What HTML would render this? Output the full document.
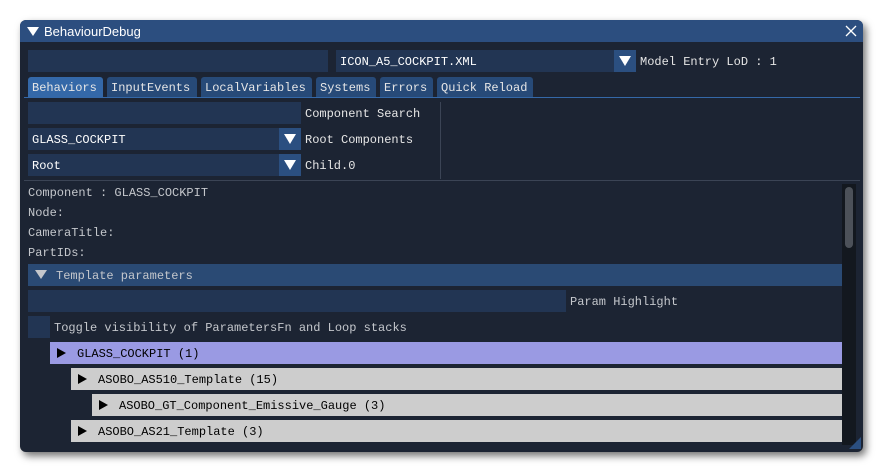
<!DOCTYPE html>
<html><head><meta charset="utf-8"><style>
*{margin:0;padding:0;box-sizing:border-box}
body{width:884px;height:473px;background:#fff;position:relative;overflow:hidden;font-family:"Liberation Mono","DejaVu Sans Mono",monospace;font-size:12px;color:#e6e6e6}
.a{position:absolute}
.win{left:20px;top:20px;width:843px;height:432px;background:#1c2433;border-radius:6px;box-shadow:3px 4px 8px rgba(0,0,0,.55);overflow:hidden}
.t{position:absolute;white-space:nowrap;line-height:22px;padding-top:1px}
.f{position:absolute;background:#223553;height:22px}
.ab{position:absolute;background:#2b4f80;width:22px;height:22px}
.ab::after{content:"";position:absolute;left:5px;top:6px;border-left:6px solid transparent;border-right:6px solid transparent;border-top:10px solid #fff}
.tab{position:absolute;top:77px;height:20px;background:#274a78;border-radius:3px 3px 0 0;line-height:20px;padding-left:4px;padding-top:1px;white-space:nowrap}
.row{position:absolute;height:22px;line-height:22px;color:#000;white-space:nowrap;padding-top:1px}
.ra{display:inline-block;width:0;height:0;border-top:5px solid transparent;border-bottom:5px solid transparent;border-left:9px solid #000;margin-right:11px;vertical-align:-1px}
.g{color:#c4c7cc}
</style></head><body>
<div class="a win"></div>
<div class="a" style="left:20px;top:20px;width:843px;height:22px;background:#2c4e7f;border-radius:6px 6px 0 0"></div>
<div class="a" style="left:27px;top:27px;border-left:6px solid transparent;border-right:6px solid transparent;border-top:9px solid #fff"></div>
<div class="t" style="left:44px;top:20px;font-family:'Liberation Sans',sans-serif;font-size:13px;color:#fff">BehaviourDebug</div>
<svg class="a" style="left:845px;top:25px" width="12" height="12"><path d="M1 1L11 11M11 1L1 11" stroke="#fff" stroke-width="1.3"/></svg>

<div class="f" style="left:28px;top:50px;width:300px"></div>
<div class="f" style="left:336px;top:50px;width:278px"></div>
<div class="ab" style="left:614px;top:50px"></div>
<div class="t" style="left:340px;top:50px;color:#fff">ICON_A5_COCKPIT.XML</div>
<div class="t" style="left:640px;top:50px">Model Entry LoD : 1</div>

<div class="tab" style="left:28px;width:75px;background:#3468a8">Behaviors</div>
<div class="tab" style="left:107px;width:90px">InputEvents</div>
<div class="tab" style="left:201px;width:111px">LocalVariables</div>
<div class="tab" style="left:316px;width:60px">Systems</div>
<div class="tab" style="left:380px;width:53px">Errors</div>
<div class="tab" style="left:437px;width:96px">Quick Reload</div>
<div class="a" style="left:24px;top:97px;width:836px;height:1px;background:#3468a8"></div>

<div class="f" style="left:28px;top:102px;width:273px"></div>
<div class="t" style="left:305px;top:102px">Component Search</div>
<div class="f" style="left:28px;top:128px;width:251px"></div>
<div class="ab" style="left:279px;top:128px"></div>
<div class="t" style="left:32px;top:128px;color:#fff">GLASS_COCKPIT</div>
<div class="t" style="left:305px;top:128px">Root Components</div>
<div class="f" style="left:28px;top:154px;width:251px"></div>
<div class="ab" style="left:279px;top:154px"></div>
<div class="t" style="left:32px;top:154px;color:#fff">Root</div>
<div class="t" style="left:305px;top:154px">Child.0</div>
<div class="a" style="left:440px;top:102px;width:1px;height:77px;background:#3b4455"></div>
<div class="a" style="left:24px;top:180px;width:836px;height:1px;background:#3b4455"></div>

<div class="t g" style="left:28px;top:181px">Component : GLASS_COCKPIT</div>
<div class="t g" style="left:28px;top:201px">Node:</div>
<div class="t g" style="left:28px;top:221px">CameraTitle:</div>
<div class="t g" style="left:28px;top:241px">PartIDs:</div>

<div class="a" style="left:28px;top:264px;width:814px;height:22px;background:#2a4a74"></div>
<div class="a" style="left:35px;top:270px;border-left:6px solid transparent;border-right:6px solid transparent;border-top:9px solid #c4c7cc"></div>
<div class="t g" style="left:56px;top:264px">Template parameters</div>

<div class="f" style="left:28px;top:290px;width:538px"></div>
<div class="t g" style="left:570px;top:290px">Param Highlight</div>
<div class="f" style="left:28px;top:316px;width:22px"></div>
<div class="t g" style="left:54px;top:316px">Toggle visibility of ParametersFn and Loop stacks</div>

<div class="row" style="left:50px;top:342px;width:792px;background:#9a9ae3;padding-left:7px"><span class="ra"></span>GLASS_COCKPIT (1)</div>
<div class="row" style="left:71px;top:368px;width:771px;background:#cdcdcd;padding-left:7px"><span class="ra"></span>ASOBO_AS510_Template (15)</div>
<div class="row" style="left:92px;top:394px;width:750px;background:#cdcdcd;padding-left:7px"><span class="ra"></span>ASOBO_GT_Component_Emissive_Gauge (3)</div>
<div class="row" style="left:71px;top:420px;width:771px;background:#cdcdcd;padding-left:7px"><span class="ra"></span>ASOBO_AS21_Template (3)</div>

<div class="a" style="left:842px;top:184px;width:14px;height:261px;background:#13181f"></div>
<div class="a" style="left:845px;top:187px;width:8px;height:61px;background:#4c5159;border-radius:4px"></div>
<div class="a" style="left:849px;top:437px;width:0;height:0;border-left:12px solid transparent;border-bottom:12px solid #2b4f80"></div>
</body></html>
